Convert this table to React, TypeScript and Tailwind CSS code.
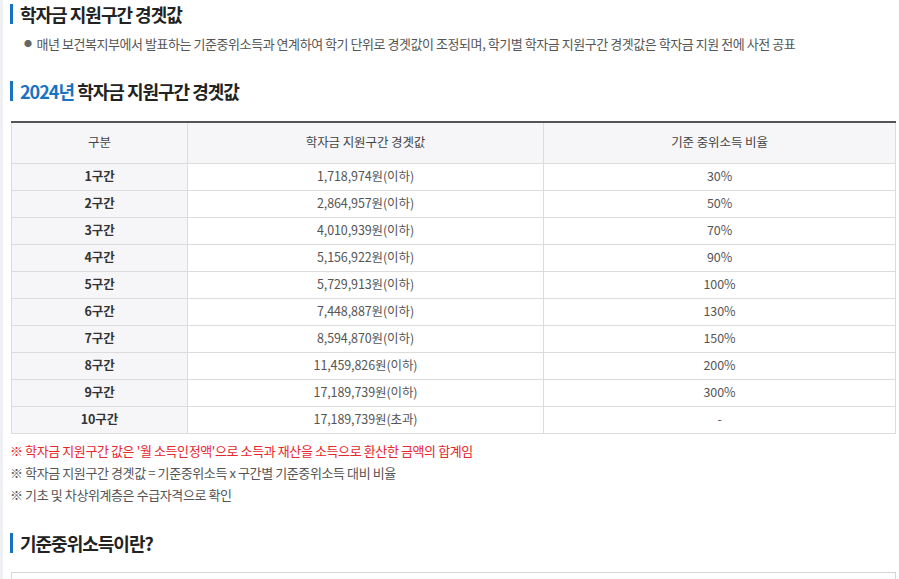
const ROWS = [
  { band: '1구간', limit: '1,718,974원(이하)', rate: '30%' },
  { band: '2구간', limit: '2,864,957원(이하)', rate: '50%' },
  { band: '3구간', limit: '4,010,939원(이하)', rate: '70%' },
  { band: '4구간', limit: '5,156,922원(이하)', rate: '90%' },
  { band: '5구간', limit: '5,729,913원(이하)', rate: '100%' },
  { band: '6구간', limit: '7,448,887원(이하)', rate: '130%' },
  { band: '7구간', limit: '8,594,870원(이하)', rate: '150%' },
  { band: '8구간', limit: '11,459,826원(이하)', rate: '200%' },
  { band: '9구간', limit: '17,189,739원(이하)', rate: '300%' },
  { band: '10구간', limit: '17,189,739원(초과)', rate: '-' },
]

function SectionTitle({ children }: { children: React.ReactNode }) {
  return (
    <h2 className="flex items-center gap-[7px] text-[18px] font-bold leading-[22px] text-[#222] tracking-[-1px]">
      <span className="w-[3px] h-[20px] bg-[#1a73c2]" />
      <span>{children}</span>
    </h2>
  )
}

export default function App() {
  return (
    <div
      className="flex w-[899px] h-[579px] overflow-hidden bg-white text-[#444]"
      style={{ fontFamily: '"Noto Sans CJK KR", "Noto Sans", sans-serif' }}
    >
      <div className="w-[3px] shrink-0 bg-[#eef0f3]" />
      <div className="flex-1 pl-[7px] pr-[4px]">
        {/* Intro */}
        <div className="pt-[3px]">
          <SectionTitle>학자금 지원구간 경곗값</SectionTitle>
          <p className="mt-[10px] pl-[14px] text-[13px] leading-[18px] text-[#555] tracking-[-0.45px] whitespace-nowrap">
            <span className="text-[#666] text-[8px] mr-[5px] align-[2px]">●</span>
            매년 보건복지부에서 발표하는 기준중위소득과 연계하여 학기 단위로 경곗값이 조정되며, 학기별 학자금 지원구간 경곗값은 학자금 지원 전에 사전 공표
          </p>
        </div>

        {/* Table section */}
        <div className="mt-[27px]">
          <SectionTitle>
            <span className="text-[#1a73c2]">2024년</span> 학자금 지원구간 경곗값
          </SectionTitle>
          <table className="mt-[19px] ml-[1px] w-[885px] border-collapse border-t-2 border-t-[#555] text-[12.5px] tracking-[-0.1px]">
            <thead>
              <tr className="h-[41px] bg-[#f6f6f8] text-[#444]">
                <th className="w-[176px] border border-[#dcdcdc] border-t-0 font-normal">구분</th>
                <th className="w-[356px] border border-[#dcdcdc] border-t-0 font-normal">학자금 지원구간 경곗값</th>
                <th className="border border-[#dcdcdc] border-t-0 font-normal">기준 중위소득 비율</th>
              </tr>
            </thead>
            <tbody>
              {ROWS.map((r) => (
                <tr key={r.band} className="h-[27px]">
                  <td className="border border-[#dcdcdc] bg-[#f6f6f8] text-center font-bold text-[#333]">{r.band}</td>
                  <td className="border border-[#dcdcdc] text-center text-[#555]">{r.limit}</td>
                  <td className="border border-[#dcdcdc] text-center text-[#555]">{r.rate}</td>
                </tr>
              ))}
            </tbody>
          </table>

          <ul className="mt-[6px] flex flex-col text-[13px] leading-[22px] tracking-[-0.4px] whitespace-nowrap">
            <li className="text-[#e8262b]">※ 학자금 지원구간 값은 '월 소득인정액'으로 소득과 재산을 소득으로 환산한 금액의 합계임</li>
            <li className="text-[#555]">※ 학자금 지원구간 경곗값 = 기준중위소득 x 구간별 기준중위소득 대비 비율</li>
            <li className="text-[#555]">※ 기초 및 차상위계층은 수급자격으로 확인</li>
          </ul>
        </div>

        {/* Next section */}
        <div className="mt-[26px]">
          <SectionTitle>기준중위소득이란?</SectionTitle>
          <div className="mt-[18px] ml-[1px] w-[885px] h-[40px] border border-[#d6d6d6]" />
        </div>
      </div>
    </div>
  )
}
